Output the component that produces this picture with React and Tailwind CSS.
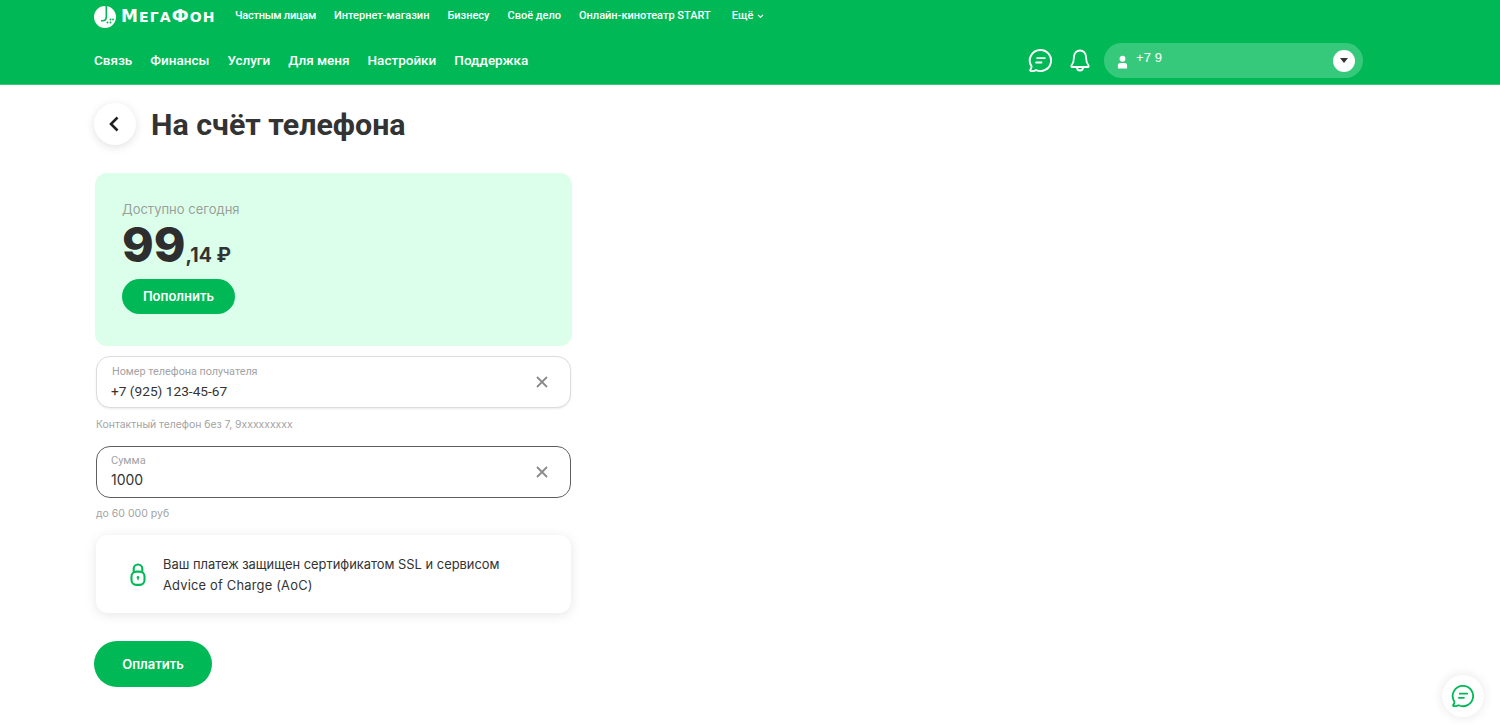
function ChatIcon({ className }) {
  return (
    <svg viewBox="0 0 26 26" fill="none" stroke="currentColor" strokeWidth="2" strokeLinecap="round" strokeLinejoin="round" className={className}>
      <path d="M13 2a11 11 0 1 1-4.600 21c-1.600.9-3.600 1.200-5.400.9-.7-.1-.9-.8-.5-1.300.8-1 1.200-2.200 1.200-3.500A11 11 0 0 1 13 2Z" />
      <path d="M9.500 10.500h8M8.500 15h5.500" />
    </svg>
  );
}

function ClearIcon() {
  return (
    <svg viewBox="0 0 12 12" fill="none" stroke="#8a8a8a" strokeWidth="1.800" className="w-[12px] h-[12px] shrink-0">
      <path d="M1 1l10 10M11 1L1 11" />
    </svg>
  );
}

function Field({ label, value, active, labelClass, valueClass }) {
  return (
    <div className={`h-[52px] rounded-[14px] bg-white flex items-center justify-between pl-[14px] pr-[22px] border ${active ? "border-[#5f5f5f]" : "border-[#dcdcdc] shadow-[0_1px_2px_rgba(0,0,0,0.08)]"}`}>
      <div>
        <div className={`font-['Roboto',sans-serif] leading-[14px] text-[#a3a3a3] ${labelClass}`}>{label}</div>
        <div className={`leading-[20px] mt-[2px] text-[#333] ${valueClass}`}>{value}</div>
      </div>
      <ClearIcon />
    </div>
  );
}

export default function App() {
  const topLinks = ["Интернет-магазин", "Бизнесу", "Своё дело", "Онлайн-кинотеатр START"];
  const mainLinks = ["Связь", "Финансы", "Услуги", "Для меня", "Настройки", "Поддержка"];

  return (
    <div className="relative h-[728px] overflow-hidden bg-white font-['Inter','Noto_Sans',sans-serif] text-[#333]">
      <header className="h-[85px] bg-[#00b956] border-b border-[#33c778] text-white pl-[94px] pr-[137px]">
        <div className="h-[33px] flex items-center">
          <div className="flex items-center w-[141px]">
            <svg viewBox="0 0 22 22" className="w-[22px] h-[22px] shrink-0">
              <circle cx="11" cy="11" r="11" fill="#fff" />
              <path d="M11.500 0v11c0 2-1 3-3 3H7v1.600h1.500c3 0 4.600-1.600 4.600-4.600V0Z" fill="#00b956" />
              <circle cx="13.500" cy="16.500" r="1" fill="#00b956" />
              <circle cx="16.500" cy="16.500" r="1" fill="#00b956" />
              <circle cx="19" cy="13.500" r="1" fill="#00b956" />
              <circle cx="16.500" cy="13.500" r="1" fill="#00b956" />
            </svg>
            <span className="ml-[5px] font-['DejaVu_Sans',sans-serif] text-[14px] font-bold tracking-[1.100px] whitespace-nowrap">
              <span className="text-[17px]">М</span>ЕГА<span className="text-[17px]">Ф</span>ОН
            </span>
          </div>
          <nav className="flex gap-[18px] font-['Roboto',sans-serif] text-[11px] font-medium">
            <span className="whitespace-nowrap tracking-[-0.25px]">Частным лицам</span>
            {topLinks.map((l) => (
              <span key={l} className="whitespace-nowrap">{l}</span>
            ))}
          </nav>
          <div className="ml-[21px] flex items-center gap-[4px] font-['Roboto',sans-serif] text-[11px] font-medium">
            Ещё
            <svg viewBox="0 0 8 6" fill="none" stroke="#fff" strokeWidth="1.400" className="w-[7px] h-[5px]">
              <path d="M1 1l3 3 3-3" />
            </svg>
          </div>
        </div>
        <div className="h-[51px] flex items-center justify-between pt-[4px]">
          <nav className="flex gap-[18px] font-['Roboto',sans-serif] text-[13.500px] font-medium">
            {mainLinks.map((l) => (
              <span key={l} className="whitespace-nowrap">{l}</span>
            ))}
          </nav>
          <div className="flex items-center">
            <ChatIcon className="w-[25px] h-[25px] text-white" />
            <svg viewBox="0 0 20 24" fill="none" stroke="#fff" strokeWidth="1.800" strokeLinejoin="round" className="w-[20px] h-[24px] ml-[17px]">
              <path d="M10 1.500c-3.600 0-6 2.800-6 6.500 0 4.500-1 6.600-2.600 8.800-.3.5 0 1.200.6 1.200h16c.6 0 .9-.7.6-1.200C17 14.600 16 12.500 16 8c0-3.700-2.400-6.500-6-6.500Z" />
              <path d="M7 18.500a3 3 0 0 0 6 0" />
            </svg>
            <div className="ml-[14px] w-[259px] h-[35px] rounded-full bg-[#36c97b] flex items-center justify-between pl-[13px] pr-[8px]">
              <div className="flex items-start">
                <svg viewBox="0 0 12 14" fill="#fff" className="w-[11px] h-[14px] mt-[2px]">
                  <circle cx="6" cy="3.500" r="3.200" />
                  <path d="M1 14V10.500C1 8.800 2.300 8 4 8h4c1.700 0 3 .8 3 2.500V14Z" />
                </svg>
                <span className="ml-[8px] -mt-[3px] font-['Liberation_Sans',sans-serif] text-[13px] leading-[16px] tracking-[0.1px]">+7 9</span>
              </div>
              <div className="w-[22px] h-[22px] rounded-full bg-white flex items-center justify-center">
                <div className="w-0 h-0 border-l-[4px] border-r-[4px] border-t-[5px] border-l-transparent border-r-transparent border-t-[#333]"></div>
              </div>
            </div>
          </div>
        </div>
      </header>

      <main className="pl-[95px] w-[572px] box-content">
        <div className="flex items-center mt-[18px] h-[42px] -ml-[1px]">
          <div className="w-[42px] h-[42px] rounded-full bg-white shadow-[0_2px_10px_rgba(0,0,0,0.12)] flex items-center justify-center">
            <svg viewBox="0 0 10 16" fill="none" stroke="#222" strokeWidth="2.600" className="w-[10px] h-[16px] -ml-[2px]">
              <path d="M8.500 1.500L2 8l6.500 6.500" />
            </svg>
          </div>
          <h1 className="ml-[15px] mt-[2px] font-['Roboto',sans-serif] text-[30.400px] font-bold leading-[36px] text-[#333] whitespace-nowrap">На счёт телефона</h1>
        </div>

        <section className="mt-[28px] w-[477px] h-[173px] rounded-[12px] bg-[#dcffeb] pl-[27px] pt-[27px]">
          <div className="text-[13px] leading-[18px] text-[#9a9f9c]">Доступно сегодня</div>
          <div className="flex items-baseline h-[52px] mt-[1px]">
            <span className="text-[48px] leading-[52px] font-extrabold text-[#2e2e2e]">99</span>
            <span className="text-[19.500px] font-bold text-[#333]">,14 ₽</span>
          </div>
          <button className="mt-[8px] w-[113px] h-[35px] rounded-full bg-[#00b956] text-white text-[13px] font-semibold">Пополнить</button>
        </section>

        <div className="ml-[1px] w-[475px]">
          <div className="mt-[10px]">
            <Field label="Номер телефона получателя" value="+7 (925) 123-45-67" labelClass="ml-[1px] mt-[1px] text-[10.800px]" valueClass="font-['Roboto',sans-serif] text-[13.700px] -mt-[1px]" />
          </div>
          <div className="mt-[10px] text-[10.400px] leading-[14px] text-[#a3a3a3]">Контактный телефон без 7, 9xxxxxxxxx</div>
          <div className="mt-[14px]">
            <Field label="Сумма" value="1000" active labelClass="text-[11px]" valueClass="text-[14px]" />
          </div>
          <div className="mt-[9px] text-[10.500px] leading-[14px] text-[#a3a3a3]">до 60 000 руб</div>

          <div className="mt-[14px] h-[78px] rounded-[12px] bg-white shadow-[0_2px_12px_rgba(0,0,0,0.1)] flex items-center pl-[34px]">
            <svg viewBox="0 0 16 24" fill="none" stroke="#00b956" strokeWidth="2.200" className="w-[16px] h-[23px] shrink-0">
              <rect x="1.200" y="9" width="13.600" height="13.800" rx="5" />
              <path d="M3.500 9V6a4.500 4.500 0 0 1 9 0v3" />
              <circle cx="8" cy="15" r="1.400" fill="#00b956" stroke="none" />
              <path d="M8 15v3" strokeWidth="1.200" />
            </svg>
            <p className="ml-[17px] mt-[2px] text-[12.900px] leading-[21px] text-[#333]">
              Ваш платеж защищен сертификатом SSL и сервисом
              <br />
              <span className="tracking-[0.2px]">Advice of Charge (AoC)</span>
            </p>
          </div>
        </div>

        <button className="mt-[28px] -ml-[1px] w-[118px] h-[46px] rounded-full bg-[#00b956] text-white text-[13px] font-semibold pt-[1px]">Оплатить</button>
      </main>

      <div className="absolute left-[1442px] top-[675px] w-[42px] h-[42px] rounded-full bg-white shadow-[0_0_12px_rgba(0,0,0,0.1)] flex items-center justify-center">
        <ChatIcon className="w-[24px] h-[24px] text-[#00b956]" />
      </div>
    </div>
  );
}
